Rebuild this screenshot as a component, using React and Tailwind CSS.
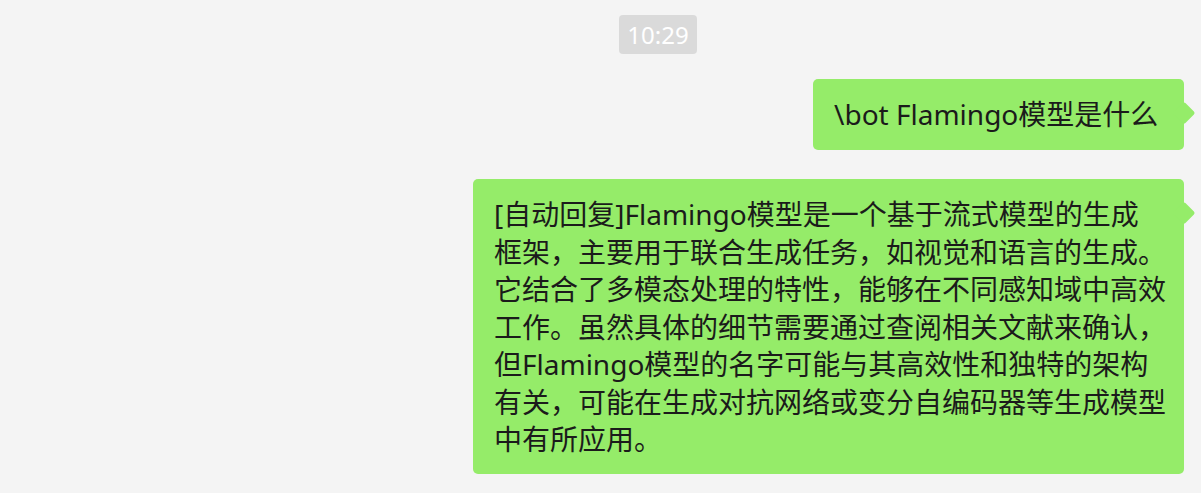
import React from 'react'

const FONT = { fontFamily: '"Noto Sans", "Noto Sans CJK SC", sans-serif' }

const REPLY = [
  '[自动回复]Flamingo模型是一个基于流式模型的生成',
  '框架，主要用于联合生成任务，如视觉和语言的生成。',
  '它结合了多模态处理的特性，能够在不同感知域中高效',
  '工作。虽然具体的细节需要通过查阅相关文献来确认，',
  '但Flamingo模型的名字可能与其高效性和独特的架构',
  '有关，可能在生成对抗网络或变分自编码器等生成模型',
  '中有所应用。',
]

function Bubble({ className, children }) {
  return (
    <div className={`relative ml-auto mr-[17px] rounded-[5px] bg-[#95ec69] pl-[21px] pt-[17px] text-[28px] leading-[37.5px] text-[#1b1b1b] ${className}`}>
      {/* tail */}
      <span className="absolute right-[-8px] top-[26px] h-4 w-4 rotate-45 rounded-[2px] bg-[#95ec69]" />
      <div className="relative">{children}</div>
    </div>
  )
}

export default function App() {
  return (
    <div className="h-[493px] w-full overflow-hidden bg-[#f4f4f4] pt-[15px]" style={FONT}>
      <div className="ml-[619px] flex h-[39px] w-[78px] items-center justify-center rounded-[4px] bg-[#dadada] text-[24px] text-white">
        10:29
      </div>

      <Bubble className="mt-[25px] h-[71px] w-[371px]">
        <div className="whitespace-nowrap">\bot Flamingo模型是什么</div>
      </Bubble>

      <Bubble className="mt-[29px] h-[295px] w-[711px]">
        {REPLY.map(line => (
          <div key={line} className="whitespace-nowrap">{line}</div>
        ))}
      </Bubble>
    </div>
  )
}
